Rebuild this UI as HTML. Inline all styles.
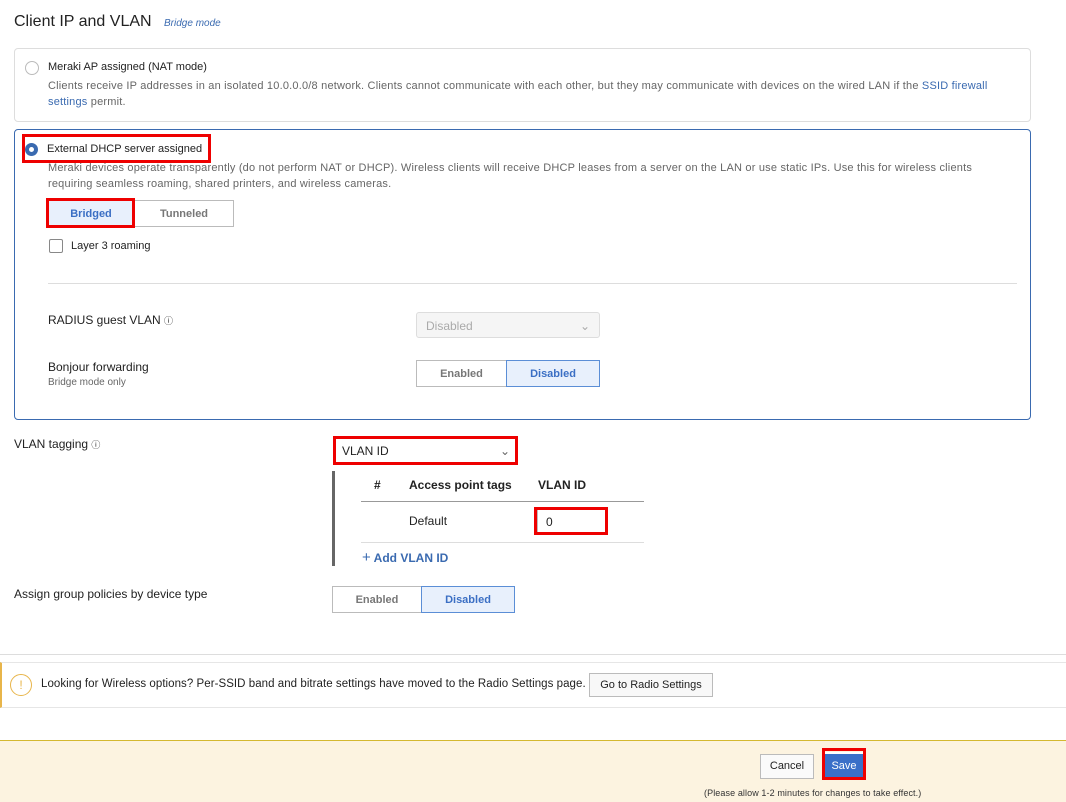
<!DOCTYPE html><html><head><style>
*{box-sizing:border-box;margin:0;padding:0}
body{width:1066px;height:802px;position:relative;background:#fff;font-family:"Liberation Sans",sans-serif;color:#222;font-size:12px;overflow:hidden}
.a{position:absolute}
.red{position:absolute;border:3px solid #e00;}
.g{color:#666;font-size:11px;line-height:16px;letter-spacing:0.2px}
.btn{position:absolute;border:1px solid #bbb;background:#fff;text-align:center;font-weight:bold;color:#777;font-size:11px}
.sel{background:#e8f0fc;border-color:#5b8ed6;color:#3b6fc4}
</style></head><body>
<div class="a" style="left:14px;top:13px;font-size:16px">Client IP and VLAN <i style="font-size:10px;color:#3a6ab0;margin-left:8px">Bridge mode</i></div>
<div class="a" style="left:14px;top:48px;width:1017px;height:74px;border:1px solid #ddd;border-radius:4px"></div>
<div class="a" style="left:25px;top:61px;width:14px;height:14px;border:1px solid #bbb;border-radius:50%"></div>
<div class="a" style="left:48px;top:61px;font-size:11px">Meraki AP assigned (NAT mode)</div>
<div class="a g" style="left:48px;top:78px;width:960px">Clients receive IP addresses in an isolated 10.0.0.0/8 network. Clients cannot communicate with each other, but they may communicate with devices on the wired LAN if the <span style="color:#3a6ab0">SSID firewall settings</span> permit.</div>
<div class="a" style="left:14px;top:129px;width:1017px;height:291px;border:1px solid #3a6ab0;border-radius:4px"></div>
<div class="a" style="left:25px;top:143px;width:13px;height:13px;border:4px solid #3a6ab0;border-radius:50%"></div>
<div class="a" style="left:47px;top:143px;font-size:11px">External DHCP server assigned</div>
<div class="red" style="left:22px;top:134px;width:189px;height:29px"></div>
<div class="a g" style="left:48px;top:160px;width:945px">Meraki devices operate transparently (do not perform NAT or DHCP). Wireless clients will receive DHCP leases from a server on the LAN or use static IPs. Use this for wireless clients requiring seamless roaming, shared printers, and wireless cameras.</div>
<div class="btn sel" style="left:48px;top:200px;width:86px;height:27px;line-height:26px">Bridged</div>
<div class="btn" style="left:134px;top:200px;width:100px;height:27px;line-height:26px">Tunneled</div>
<div class="red" style="left:46px;top:198px;width:89px;height:30px"></div>
<div class="a" style="left:49px;top:239px;width:14px;height:14px;border:1px solid #888;border-radius:2px"></div>
<div class="a" style="left:71px;top:240px;font-size:11px">Layer 3 roaming</div>
<div class="a" style="left:48px;top:283px;width:969px;border-top:1px solid #ddd"></div>
<div class="a" style="left:48px;top:313px">RADIUS guest VLAN <span style="font-size:9px">ⓘ</span></div>
<div class="a" style="left:416px;top:312px;width:184px;height:26px;border:1px solid #ddd;border-radius:3px;background:#f5f5f5;color:#aaa;padding:6px 9px">Disabled<span style="float:right">⌄</span></div>
<div class="a" style="left:48px;top:360px">Bonjour forwarding</div>
<div class="a" style="left:48px;top:377px;font-size:10px;color:#666">Bridge mode only</div>
<div class="btn" style="left:416px;top:360px;width:91px;height:27px;line-height:26px">Enabled</div>
<div class="btn sel" style="left:506px;top:360px;width:94px;height:27px;line-height:26px">Disabled</div>
<div class="a" style="left:14px;top:437px">VLAN tagging <span style="font-size:9px">ⓘ</span></div>
<div class="a" style="left:335px;top:438px;width:182px;height:25px;border:1px solid #bbb;padding:5px 6px">VLAN ID<span style="float:right;color:#666">⌄</span></div>
<div class="red" style="left:333px;top:436px;width:185px;height:29px"></div>
<div class="a" style="left:332px;top:471px;width:3px;height:95px;background:#666"></div>
<div class="a" style="left:374px;top:478px;font-weight:bold">#</div>
<div class="a" style="left:409px;top:478px;font-weight:bold">Access point tags</div>
<div class="a" style="left:538px;top:478px;font-weight:bold">VLAN ID</div>
<div class="a" style="left:361px;top:501px;width:283px;border-top:1px solid #999"></div>
<div class="a" style="left:409px;top:514px">Default</div>
<div class="a" style="left:537px;top:509px;width:69px;height:24px;border:1px solid #bbb;padding:5px 8px">0</div>
<div class="red" style="left:534px;top:507px;width:74px;height:28px"></div>
<div class="a" style="left:361px;top:542px;width:283px;border-top:1px solid #ddd"></div>
<div class="a" style="left:362px;top:549px;color:#3a6ab0;font-weight:bold;font-size:12px"><span style="font-weight:normal;font-size:15px">+</span> Add VLAN ID</div>
<div class="a" style="left:14px;top:587px">Assign group policies by device type</div>
<div class="btn" style="left:332px;top:586px;width:90px;height:27px;line-height:26px">Enabled</div>
<div class="btn sel" style="left:421px;top:586px;width:94px;height:27px;line-height:26px">Disabled</div>
<div class="a" style="left:0;top:654px;width:1066px;border-top:1px solid #ddd"></div>
<div class="a" style="left:0;top:662px;width:1066px;height:46px;border-top:1px solid #e6e6e6;border-bottom:1px solid #e6e6e6;border-left:2px solid #e8b54a"></div>
<div class="a" style="left:10px;top:674px;width:22px;height:22px;border:1px solid #e8b54a;border-radius:50%;color:#e8b54a;text-align:center;line-height:20px;font-size:12px">!</div>
<div class="a" style="left:41px;top:678px;font-size:11.5px;letter-spacing:0.05px">Looking for Wireless options? Per-SSID band and bitrate settings have moved to the Radio Settings page.</div>
<div class="a" style="left:589px;top:673px;width:124px;height:24px;border:1px solid #bbb;background:#f8f8f8;text-align:center;line-height:22px;font-size:11px">Go to Radio Settings</div>
<div class="a" style="left:0;top:740px;width:1066px;height:62px;background:#fcf3e0;border-top:1px solid #d4b830"></div>
<div class="a" style="left:760px;top:754px;width:54px;height:25px;border:1px solid #bbb;background:#fafafa;text-align:center;line-height:23px;font-size:11px">Cancel</div>
<div class="a" style="left:825px;top:752px;width:38px;height:25px;background:#3a6fc8;color:#fff;text-align:center;line-height:25px;font-size:11px;border-top:2px solid #fff">Save</div>
<div class="red" style="left:822px;top:748px;width:44px;height:32px"></div>
<div class="a" style="left:704px;top:788px;font-size:9px;color:#333;letter-spacing:0.1px">(Please allow 1-2 minutes for changes to take effect.)</div>
</body></html>
